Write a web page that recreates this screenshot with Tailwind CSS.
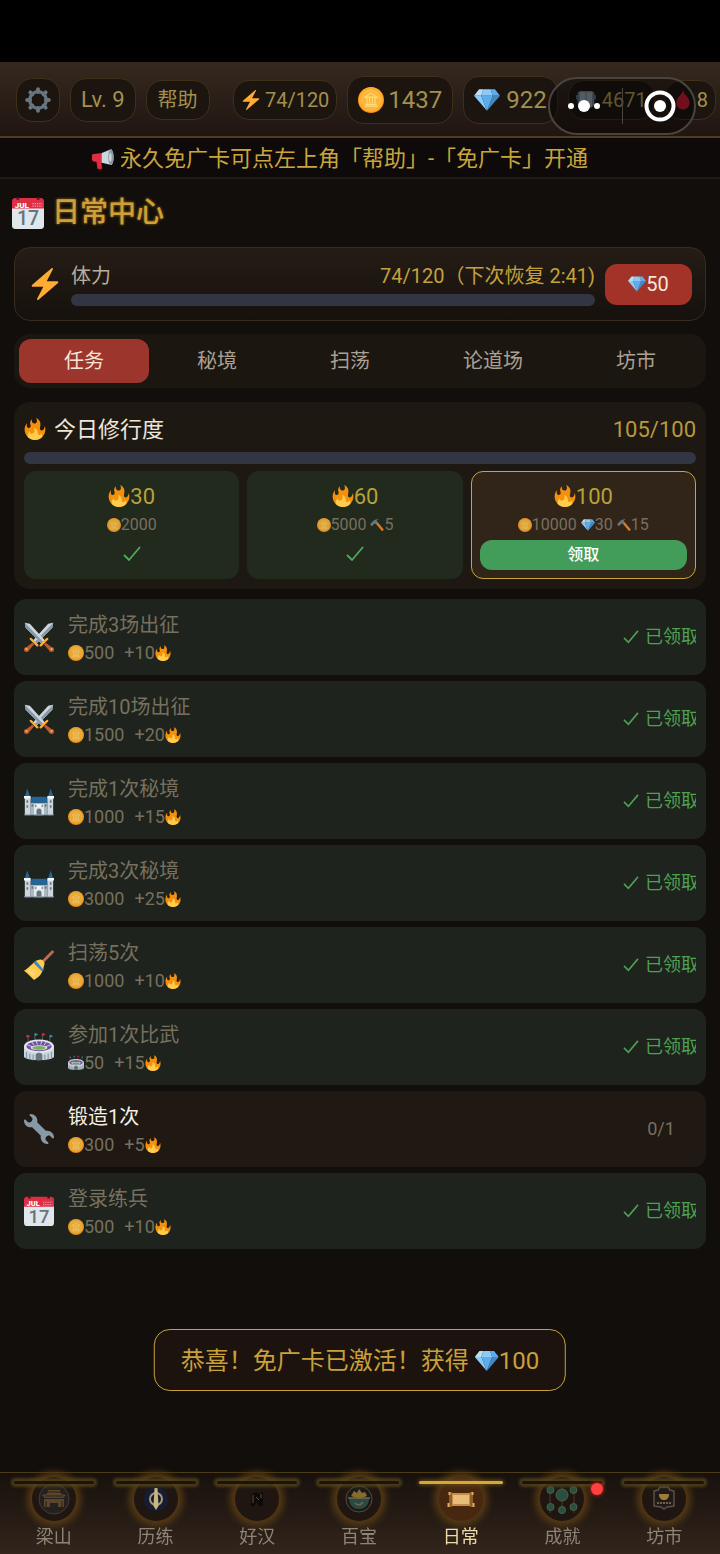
<!DOCTYPE html>
<html lang="zh-CN">
<head>
    <meta charset="UTF-8">
    <meta name="viewport" content="width=device-width, initial-scale=1.0">
    <title>日常中心</title>
    <script src="https://cdn.jsdelivr.net/npm/@tailwindcss/browser@4"></script>
</head>
<body class="bg-[#120e0b] font-[Roboto,'Noto_Sans_CJK_SC',sans-serif] text-[#d9cfc0]">

    <!-- Icon sprite -->
    <svg class="hidden" aria-hidden="true">
        <symbol id="fire" viewBox="0 0 36 36">
            <path fill="#F4900C" d="M35 19c0-2.062-.367-4.039-1.04-5.868-.46 5.389-3.333 8.157-6.335 6.868-2.812-1.208-.917-5.917-.777-8.164.236-3.809-.012-8.169-6.931-11.794 2.875 5.5.333 8.917-2.333 9.125-2.958.231-5.667-2.542-4.667-7.042-3.238 2.386-3.332 6.402-2.333 9 1.042 2.708-.042 4.958-2.583 5.208-2.84.28-4.418-3.041-2.963-8.333C2.52 10.965 1 14.805 1 19c0 9.389 7.611 17 17 17s17-7.611 17-17z"/>
            <path fill="#FFCC4D" d="M28.394 23.999c.148 3.084-2.561 4.293-4.019 3.709-2.106-.843-1.541-2.291-2.083-5.291s-2.625-5.083-5.708-6c2.25 6.333-1.247 8.667-3.08 9.084-1.872.426-3.753-.001-3.968-4.007C7.352 23.668 6 26.676 6 30c0 .368.023.73.055 1.09C9.125 34.124 13.342 36 18 36s8.875-1.876 11.945-4.91c.032-.36.055-.722.055-1.09 0-2.187-.584-4.236-1.606-6.001z"/>
        </symbol>
        <symbol id="zap" viewBox="0 0 36 36">
            <path fill="#FFAC33" d="M32.938 15.651C32.792 15.26 32.418 15 32 15H19.925L26.89 1.458c.219-.426.106-.947-.271-1.243C26.437.071 26.218 0 26 0c-.233 0-.466.082-.653.243L18 6.588 3.347 19.243c-.316.273-.43.714-.284 1.105S3.582 21 4 21h12.075L9.11 34.542c-.219.426-.106.947.271 1.243.182.144.401.215.619.215.233 0 .466-.082.653-.243L18 29.412l14.653-12.655c.317-.273.43-.714.285-1.106z"/>
        </symbol>
        <symbol id="gem" viewBox="0 0 36 36">
            <path fill="#BDDDF4" d="M13 3H7l-7 9h10z"/>
            <path fill="#5DADEC" d="M36 12l-7-9h-6l3 9z"/>
            <path fill="#4289C1" d="M26 12h10L18 33z"/>
            <path fill="#8CCAF7" d="M10 12H0l18 21zm3-9l-3 9h16l-3-9z"/>
            <path fill="#5DADEC" d="M18 33l-8-21h16z"/>
        </symbol>
        <symbol id="coin" viewBox="0 0 36 36">
            <circle cx="18" cy="18" r="18" fill="#F4900C"/>
            <circle cx="18" cy="17.5" r="17" fill="#FFAC33"/>
            <circle cx="18" cy="17.5" r="13.5" fill="#FFCC4D"/>
            <circle cx="18" cy="18" r="12.7" fill="#FDB63A"/>
            <path fill="none" stroke="#FFDC7D" stroke-width="1.5" d="M9.5 14L18 8.5l8.500 5.500zM9 26.500h18M10.500 24h15M12.500 15v8M16 15v8M20 15v8M23.500 15v8"/>
        </symbol>
        <symbol id="wrench" viewBox="0 0 36 36">
            <path fill="#8899A6" d="M27.989 19.977c-.622 0-1.225.078-1.806.213L15.811 9.818c.134-.581.212-1.184.212-1.806C16.023 3.587 12.436 0 8.012 0 7.11 0 5.91.916 6.909 1.915l2.997 2.997s.999 1.998-.999 3.995-3.996.998-3.996.998L1.915 6.909C.916 5.91 0 7.105 0 8.012c0 4.425 3.587 8.012 8.012 8.012.622 0 1.225-.078 1.806-.212l10.371 10.371c-.135.581-.213 1.184-.213 1.806 0 4.425 3.588 8.011 8.012 8.011.901 0 2.101-.916 1.102-1.914l-2.997-2.997s-.999-1.998.999-3.995 3.995-.999 3.995-.999l2.997 2.997c1 .999 1.916-.196 1.916-1.102 0-4.425-3.587-8.013-8.011-8.013z"/>
        </symbol>
        <symbol id="hammer" viewBox="0 0 36 36">
            <path fill="#D97B2B" d="M13 12l4-4 18 21c1 2-3 6-5 4z"/>
            <path fill="#66757F" d="M1 17c-1-1 0-2 1-3l5-5c3-4 8-6 13-6 2 0 2 1 0 2-3 1-4 3-2 5l2 2-4 4-3-2-2 1-5 5c-1 1-2 1-3 0z"/>
        </symbol>
        <symbol id="calendar" viewBox="0 0 36 36">
            <path fill="#E0E7EC" d="M36 32a4 4 0 01-4 4H4a4 4 0 01-4-4V12h36z"/>
            <path fill="#DD2E44" d="M0 13V5a4 4 0 014-4h28a4 4 0 014 4v8z"/>
            <path fill="#4d1420" d="M5 0h3v3H5zM28 0h3v3h-3z"/>
            <text x="3" y="12" font-family="Roboto" font-size="9" font-weight="900" fill="#fff">JUL</text>
            <path stroke="#F4ABBA" stroke-width="1.300" stroke-dasharray="1.300 1.300" d="M23 7.500h11M23 10.300h11"/>
            <text x="18" y="32" text-anchor="middle" font-family="Roboto" font-size="22" font-weight="500" fill="#66757F">17</text>
        </symbol>
        <symbol id="swords" viewBox="0 0 36 36">
            <g id="sword">
                <path fill="#CCD6DD" d="M35 1l-1 6-20 20-4-4L29 2z"/>
                <path fill="#8899A6" d="M35 1l-1 6-20 20-2-2z"/>
                <path fill="#BE5A32" d="M2 31l8-6 2 2-7 8z"/>
                <path fill="#FFAC33" d="M7 21c-1-2 1-3 3-1l7 7c1 2 0 3-2 2z"/>
                <circle cx="3" cy="33" r="3" fill="#BE5A32"/>
                <circle cx="3" cy="32.500" r="1.400" fill="#FFAC33"/>
            </g>
            <use href="#sword" transform="matrix(-1 0 0 1 36 0)"/>
        </symbol>
        <symbol id="castle" viewBox="0 0 36 36">
            <path fill="#CCD6DD" d="M1 14h7v21H1zM28 14h7v21h-7z"/>
            <path fill="#AAB8C2" d="M8 20h20v15H8z"/>
            <path fill="#E1E8ED" d="M12 22h12v13H12z"/>
            <path fill="#226699" d="M4 3l3 9H1zM32 3l3 9h-6zM9 13h18l1 7H8z"/>
            <path fill="#F5F8FA" d="M0 12h8v3H0zM28 12h8v3h-8zM15 22h6v3h-6z"/>
            <path fill="#66757F" d="M3 17h2v3H3zM31 17h2v3h-2zM3 23h2v3H3zM31 23h2v3h-2zM9 22h2v3H9zM25 22h2v3h-2zM13 23h2v2h-2zM21 23h2v2h-2zM15 35v-5a3 3 0 016 0v5z"/>
            <path fill="#8899A6" d="M0 34h36v1H0z"/>
        </symbol>
        <symbol id="broom" viewBox="0 0 36 36">
            <path fill="#BF6952" d="M20 14L33 1c2-1 4 1 2 3L22 17z"/>
            <path fill="#FFCC4D" d="M12 15l10 10c-1 5-5 8-10 11C8 32 4 28 0 25c4-2 7-6 12-10z"/>
            <path fill="#FFE8B6" d="M4 25l6-4-4 6 7-4-4 6 7-4-5 7z" opacity=".5"/>
            <path fill="#3B88C3" d="M11 15l3-2 10 10-2 3z"/>
            <path fill="#FFCC4D" d="M14 13l3-1c2-1 4-1 6 1s2 4 1 6l-1 4z"/>
        </symbol>
        <symbol id="stadium" viewBox="0 0 36 36">
            <path stroke="#66757F" stroke-width=".8" d="M5 4v8M13 2v8M22 2v8M31 4v8"/>
            <path fill="#DD2E44" d="M3 3l5 2-5 2zM22 1l4 2-4 2z"/>
            <path fill="#3B94A8" d="M13 1l4 2-4 2zM31 3l4 2-4 2z"/>
            <path fill="#CCD6DD" d="M0 17v13c4 5 32 5 36 0V17z"/>
            <ellipse cx="18" cy="17" rx="18" ry="8" fill="#E1E8ED"/>
            <ellipse cx="18" cy="17" rx="15" ry="6" fill="#744EAA"/>
            <path stroke="#E1E8ED" stroke-width="1" d="M8 10l4 6M14 9l2 6M22 9l-2 6M28 10l-4 6M3 15l8 3M33 15l-8 3"/>
            <ellipse cx="18" cy="19" rx="10" ry="3" fill="#E1E8ED"/>
            <ellipse cx="18" cy="19" rx="8" ry="2.300" fill="#77B255"/>
            <path fill="#66757F" d="M14 34v-6c0-4 8-4 8 0v6z"/>
            <path stroke="#8899A6" stroke-width="1.500" d="M3 24v8M7 26v7M11 27v7M25 27v7M29 26v7M33 24v8"/>
        </symbol>
        <symbol id="megaphone" viewBox="0 0 36 36">
            <path fill="#A0041E" d="M6 20h9l2 13c0 3-7 3-8 1z"/>
            <path fill="#DD2E44" d="M0 13c0-2 1-3 3-3l14-2v16L3 22c-2 0-3-1-3-3zM8 22h7l1 12H9z"/>
            <path fill="#CCD6DD" d="M16 8L31 2c5 6 6 19 1 26l-16-4z"/>
            <ellipse cx="31" cy="15" rx="4.500" ry="13" fill="#8899A6"/>
            <ellipse cx="30" cy="15" rx="2" ry="7" fill="#CCD6DD"/>
        </symbol>
        <symbol id="gear" viewBox="0 0 36 36">
            <circle cx="18" cy="18" r="11.500" fill="none" stroke="#66757F" stroke-width="4.500"/>
            <path stroke="#66757F" stroke-width="5.500" stroke-linecap="round" d="M18 3v4M18 29v4M3 18h4M29 18h4M7.400 7.400l2.800 2.800M25.800 25.800l2.800 2.800M28.600 7.400l-2.800 2.800M10.200 25.800l-2.800 2.800"/>
        </symbol>
        <symbol id="iron" viewBox="0 0 36 36">
            <path fill="#66757F" d="M3 5l4-3h22l4 3v22c-4 5-10 7-15 7S7 32 3 27z"/>
            <path fill="#8899A6" d="M7 4h10v26H7zM19 4h10v26H19z"/>
            <path fill="#3b6284" d="M0 9h4v8H0zM32 9h4v8h-4z"/>
        </symbol>
        <symbol id="blood" viewBox="0 0 36 36">
            <path fill="#BE1931" d="M18 1c3 8 12 14 12 22a12 12 0 01-24 0C6 15 15 9 18 1z"/>
        </symbol>
        <symbol id="check" viewBox="0 0 18 16">
            <path fill="none" stroke="currentColor" stroke-width="1.800" d="M1 9l5 5L17 1"/>
        </symbol>
    </svg>

    <div class="flex min-h-screen flex-col">
        <!-- Status bar -->
        <div class="h-[62px] bg-black"></div>

        <!-- Resource header -->
        <header class="relative flex items-center justify-between overflow-hidden border-b-2 border-[#4d3c1e] bg-linear-to-b from-[#35291f] to-[#201511] pt-3.5 pr-1 pb-3 pl-4 text-xl whitespace-nowrap text-[#a3904f]">
            <div class="flex items-center gap-2.5">
                <button aria-label="设置" class="flex size-11 items-center justify-center rounded-2xl border border-[#3f301a] bg-[#1c150f]"><svg class="size-6.5"><use href="#gear"/></svg></button>
                <span class="flex h-11 items-center rounded-2xl border border-[#3f301a] bg-[#1c150f] px-2.5 text-[22px]">Lv. 9</span>
                <button class="h-10 rounded-2xl border border-[#3f301a] bg-[#1c150f] px-[11px]">帮助</button>
            </div>
            <div class="flex items-center gap-2.5">
                <span class="flex h-10 items-center gap-1 rounded-2xl border border-[#3f301a] bg-[#1c150f] px-[7px]"><svg class="size-5"><use href="#zap"/></svg>74/120</span>
                <span class="flex h-12 items-center gap-1 rounded-2xl border border-[#3f301a] bg-[#1c150f] px-2.5 text-2xl"><svg class="size-6.5"><use href="#coin"/></svg>1437</span>
                <span class="flex h-12 items-center gap-1.5 rounded-2xl border border-[#3f301a] bg-[#1c150f] px-2.5 text-2xl"><svg class="size-6.5"><use href="#gem"/></svg>922</span>
                <span class="flex h-10 items-center gap-1.5 rounded-2xl border border-[#3f301a] bg-[#1c150f] px-[7px] text-xl"><svg class="size-5"><use href="#iron"/></svg>4671</span>
                <span class="flex h-10 items-center gap-1 rounded-2xl border border-[#3f301a] bg-[#1c150f] px-[7px]"><svg class="size-5"><use href="#blood"/></svg>8</span>
            </div>
            <!-- Mini-program capsule -->
            <div class="absolute top-[15px] right-6 flex h-[58px] w-[148px] items-center rounded-full border-2 border-[#4b443e] bg-black/40">
                <button aria-label="更多" class="flex flex-1 justify-center pr-1"><svg class="h-4 w-8" viewBox="0 0 32 16" fill="#fff"><circle cx="3" cy="8" r="3"/><circle cx="16" cy="8" r="6"/><circle cx="29" cy="8" r="3"/></svg></button>
                <span class="h-9 w-px bg-[#4b443e]"></span>
                <button aria-label="关闭" class="flex flex-1 justify-center pl-1"><svg class="size-8" viewBox="0 0 32 32"><circle cx="16" cy="16" r="13.500" fill="none" stroke="#fff" stroke-width="4"/><circle cx="16" cy="16" r="6" fill="#fff"/></svg></button>
            </div>
        </header>

        <!-- Notice -->
        <div class="flex h-[41px] items-center justify-center gap-1.5 border-b-2 border-[#211b17] bg-[#0e0a09] pt-0.5 pr-10 text-[22px] text-[#c9a53c]">
            <svg class="size-[22px]"><use href="#megaphone"/></svg>
            <span>永久免广卡可点左上角「帮助」-「免广卡」开通</span>
        </div>

        <main class="flex flex-col px-3.5 pb-56">
            <h1 class="-ml-0.5 flex h-[68px] items-center gap-2 text-[28px] font-medium text-[#cf9f38]">
                <svg class="size-8"><use href="#calendar"/></svg>
                <span class="text-shadow-[0_0_3px_#a8730f]">日常中心</span>
            </h1>

            <!-- Energy -->
            <section class="flex h-[74px] items-center gap-2.5 rounded-2xl border border-[#382c1b] bg-linear-to-b from-[#251c15] to-[#16110d] pr-[13px] pl-3.5 text-xl">
                <svg class="size-8 shrink-0"><use href="#zap"/></svg>
                <div class="flex flex-1 flex-col gap-1">
                    <div class="flex justify-between leading-7">
                        <span class="text-[#b8ad9c]">体力</span>
                        <span class="text-[#c4a23a]">74/120（下次恢复 2:41)</span>
                    </div>
                    <div role="progressbar" aria-label="体力" aria-valuenow="74" aria-valuemax="120" class="h-3 rounded-full bg-[#323643]"></div>
                </div>
                <button class="flex h-[41px] w-[87px] items-center justify-center rounded-xl bg-[#a33328] text-[#f7e6d6]"><svg class="size-[18px]"><use href="#gem"/></svg>50</button>
            </section>

            <!-- Tabs -->
            <div role="tablist" class="mt-[13px] flex gap-[3px] rounded-2xl bg-[#1c1611] p-[5px] text-xl text-[#aba192]">
                <button role="tab" aria-selected="true" class="h-11 flex-auto rounded-xl bg-[#9c352b] text-[#f7e6d6]">任务</button>
                <button role="tab" class="h-11 flex-auto">秘境</button>
                <button role="tab" class="h-11 flex-auto">扫荡</button>
                <button role="tab" class="h-11 flex-auto">论道场</button>
                <button role="tab" class="h-11 flex-auto">坊市</button>
            </div>

            <!-- Daily progress -->
            <section class="mt-3.5 rounded-2xl bg-[#1e1813] p-2.5">
                <div class="flex h-[34px] items-center text-[22px]">
                    <svg class="mr-2 size-[22px]"><use href="#fire"/></svg>
                    <h2 class="flex-1 text-[#efe6da]">今日修行度</h2>
                    <span class="text-[#b8993b]">105/100</span>
                </div>
                <div role="progressbar" aria-label="今日修行度" aria-valuenow="105" aria-valuemax="100" class="mt-1.5 h-3 rounded-full bg-[#323643]"></div>
                <div class="mt-[7px] flex gap-2 text-base text-[#77705f]">
                    <div class="flex flex-1 flex-col items-center rounded-xl bg-[#222a1e] px-1 py-[9px]">
                        <p class="flex h-8 items-center text-[22px] text-[#b8a03b]"><svg class="size-[22px]"><use href="#fire"/></svg>30</p>
                        <p class="flex h-6.5 items-center"><svg class="size-3.5 opacity-85"><use href="#coin"/></svg>2000</p>
                        <svg class="mt-2 h-4 w-[18px] text-[#4faa5c]"><use href="#check"/></svg>
                    </div>
                    <div class="flex flex-1 flex-col items-center rounded-xl bg-[#222a1e] px-1 py-[9px]">
                        <p class="flex h-8 items-center text-[22px] text-[#b8a03b]"><svg class="size-[22px]"><use href="#fire"/></svg>60</p>
                        <p class="flex h-6.5 items-center"><svg class="size-3.5 opacity-85"><use href="#coin"/></svg>5000<svg class="ml-1 size-3.5"><use href="#hammer"/></svg>5</p>
                        <svg class="mt-2 h-4 w-[18px] text-[#4faa5c]"><use href="#check"/></svg>
                    </div>
                    <div class="flex flex-1 flex-col items-center rounded-xl border border-[#c9a53c] bg-[#302518] p-2">
                        <p class="flex h-8 items-center text-[22px] text-[#b8a03b]"><svg class="size-[22px]"><use href="#fire"/></svg>100</p>
                        <p class="flex h-6.5 items-center"><svg class="size-3.5 opacity-85"><use href="#coin"/></svg>10000<svg class="ml-1 size-3.5"><use href="#gem"/></svg>30<svg class="ml-1 size-3.5"><use href="#hammer"/></svg>15</p>
                        <button class="mt-0.5 h-[30px] w-full rounded-xl bg-[#429d5b] font-medium text-white">领取</button>
                    </div>
                </div>
            </section>

            <!-- Tasks -->
            <ul class="mt-2.5 flex flex-col gap-1.5 text-lg text-[#77705f]">
                <li class="flex h-[76px] items-center gap-3.5 rounded-xl bg-[#1e231d] px-2.5">
                    <svg class="size-[30px]"><use href="#swords"/></svg>
                    <div class="flex-1 pt-1">
                        <h3 class="text-xl leading-7">完成3场出征</h3>
                        <p class="flex h-7 items-center"><svg class="size-4 opacity-90"><use href="#coin"/></svg>500<span class="ml-2.5">+10</span><svg class="size-4"><use href="#fire"/></svg></p>
                    </div>
                    <span class="flex w-[73px] items-center gap-1.5 overflow-hidden whitespace-nowrap text-[#4fa052]"><svg class="h-3.5 w-4 shrink-0"><use href="#check"/></svg>已领取</span>
                </li>
                <li class="flex h-[76px] items-center gap-3.5 rounded-xl bg-[#1e231d] px-2.5">
                    <svg class="size-[30px]"><use href="#swords"/></svg>
                    <div class="flex-1 pt-1">
                        <h3 class="text-xl leading-7">完成10场出征</h3>
                        <p class="flex h-7 items-center"><svg class="size-4 opacity-90"><use href="#coin"/></svg>1500<span class="ml-2.5">+20</span><svg class="size-4"><use href="#fire"/></svg></p>
                    </div>
                    <span class="flex w-[73px] items-center gap-1.5 overflow-hidden whitespace-nowrap text-[#4fa052]"><svg class="h-3.5 w-4 shrink-0"><use href="#check"/></svg>已领取</span>
                </li>
                <li class="flex h-[76px] items-center gap-3.5 rounded-xl bg-[#1e231d] px-2.5">
                    <svg class="size-[30px]"><use href="#castle"/></svg>
                    <div class="flex-1 pt-1">
                        <h3 class="text-xl leading-7">完成1次秘境</h3>
                        <p class="flex h-7 items-center"><svg class="size-4 opacity-90"><use href="#coin"/></svg>1000<span class="ml-2.5">+15</span><svg class="size-4"><use href="#fire"/></svg></p>
                    </div>
                    <span class="flex w-[73px] items-center gap-1.5 overflow-hidden whitespace-nowrap text-[#4fa052]"><svg class="h-3.5 w-4 shrink-0"><use href="#check"/></svg>已领取</span>
                </li>
                <li class="flex h-[76px] items-center gap-3.5 rounded-xl bg-[#1e231d] px-2.5">
                    <svg class="size-[30px]"><use href="#castle"/></svg>
                    <div class="flex-1 pt-1">
                        <h3 class="text-xl leading-7">完成3次秘境</h3>
                        <p class="flex h-7 items-center"><svg class="size-4 opacity-90"><use href="#coin"/></svg>3000<span class="ml-2.5">+25</span><svg class="size-4"><use href="#fire"/></svg></p>
                    </div>
                    <span class="flex w-[73px] items-center gap-1.5 overflow-hidden whitespace-nowrap text-[#4fa052]"><svg class="h-3.5 w-4 shrink-0"><use href="#check"/></svg>已领取</span>
                </li>
                <li class="flex h-[76px] items-center gap-3.5 rounded-xl bg-[#1e231d] px-2.5">
                    <svg class="size-[30px]"><use href="#broom"/></svg>
                    <div class="flex-1 pt-1">
                        <h3 class="text-xl leading-7">扫荡5次</h3>
                        <p class="flex h-7 items-center"><svg class="size-4 opacity-90"><use href="#coin"/></svg>1000<span class="ml-2.5">+10</span><svg class="size-4"><use href="#fire"/></svg></p>
                    </div>
                    <span class="flex w-[73px] items-center gap-1.5 overflow-hidden whitespace-nowrap text-[#4fa052]"><svg class="h-3.5 w-4 shrink-0"><use href="#check"/></svg>已领取</span>
                </li>
                <li class="flex h-[76px] items-center gap-3.5 rounded-xl bg-[#1e231d] px-2.5">
                    <svg class="size-[30px]"><use href="#stadium"/></svg>
                    <div class="flex-1 pt-1">
                        <h3 class="text-xl leading-7">参加1次比武</h3>
                        <p class="flex h-7 items-center"><svg class="size-4 opacity-90"><use href="#stadium"/></svg>50<span class="ml-2.5">+15</span><svg class="size-4"><use href="#fire"/></svg></p>
                    </div>
                    <span class="flex w-[73px] items-center gap-1.5 overflow-hidden whitespace-nowrap text-[#4fa052]"><svg class="h-3.5 w-4 shrink-0"><use href="#check"/></svg>已领取</span>
                </li>
                <li class="flex h-[76px] items-center gap-3.5 rounded-xl bg-[#1f1813] px-2.5">
                    <svg class="size-[30px]"><use href="#wrench"/></svg>
                    <div class="flex-1 pt-1">
                        <h3 class="text-xl leading-7 text-[#f6eee2]">锻造1次</h3>
                        <p class="flex h-7 items-center"><svg class="size-4 opacity-90"><use href="#coin"/></svg>300<span class="ml-2.5">+5</span><svg class="size-4"><use href="#fire"/></svg></p>
                    </div>
                    <span class="w-[70px] text-center">0/1</span>
                </li>
                <li class="flex h-[76px] items-center gap-3.5 rounded-xl bg-[#1e231d] px-2.5">
                    <svg class="size-[30px]"><use href="#calendar"/></svg>
                    <div class="flex-1 pt-1">
                        <h3 class="text-xl leading-7">登录练兵</h3>
                        <p class="flex h-7 items-center"><svg class="size-4 opacity-90"><use href="#coin"/></svg>500<span class="ml-2.5">+10</span><svg class="size-4"><use href="#fire"/></svg></p>
                    </div>
                    <span class="flex w-[73px] items-center gap-1.5 overflow-hidden whitespace-nowrap text-[#4fa052]"><svg class="h-3.5 w-4 shrink-0"><use href="#check"/></svg>已领取</span>
                </li>
            </ul>
        </main>
    </div>

    <!-- Toast -->
    <div role="status" class="fixed bottom-[163px] left-1/2 flex h-[62px] -translate-x-1/2 items-center rounded-2xl border border-[#c9a03a] bg-[#1d130e] px-6.5 pt-0.5 text-2xl whitespace-nowrap text-[#c9a03a]">
        恭喜！免广卡已激活！获得<svg class="ml-1.5 size-6"><use href="#gem"/></svg>100
    </div>

    <!-- Bottom navigation -->
    <nav class="fixed inset-x-0 bottom-0 flex h-[82px] border-t border-[#4b3b16] bg-linear-to-b from-[#17110d] to-[#33251c] pr-[5px] pl-[3px] text-lg text-[#8f8574]">
        <a href="#" class="relative flex flex-1 flex-col items-center pt-1">
            <span class="flex size-11 items-center justify-center rounded-full bg-[#1f1611] shadow-[0_0_7px_5px_#553914]">
                <svg class="size-8 opacity-80" viewBox="0 0 32 32"><circle cx="16" cy="16" r="15" fill="#262320" stroke="#4b4842"/><path fill="#6b5235" d="M4 12l5-1 1-4h12l1 4 5 1-3 3H7zM6 16h20v8h-6v-4h-8v4H6z"/><path stroke="#2b2119" d="M9 9h14M7 13h18M8 18v6M24 18v6"/></svg>
            </span>
            <span class="absolute top-2 h-[3px] w-20 rounded-full bg-[#1c1409] shadow-[0_0_3px_3px_#56461bcc]"></span>
            <span class="pt-0.5 leading-7">梁山</span>
        </a>
        <a href="#" class="relative flex flex-1 flex-col items-center pt-1">
            <span class="flex size-11 items-center justify-center rounded-full bg-[#1f1611] shadow-[0_0_7px_5px_#553914]">
                <svg class="size-8" viewBox="0 0 32 32"><circle cx="16" cy="16" r="12" fill="#171c35"/><circle cx="16" cy="16" r="6" fill="none" stroke="#a59a7b" stroke-width="2"/><path fill="#c9b87c" d="M14.500 5h3l1 18-2.500 4-2.500-4z"/></svg>
            </span>
            <span class="absolute top-2 h-[3px] w-20 rounded-full bg-[#1c1409] shadow-[0_0_3px_3px_#56461bcc]"></span>
            <span class="pt-0.5 leading-7">历练</span>
        </a>
        <a href="#" class="relative flex flex-1 flex-col items-center pt-1">
            <span class="flex size-11 items-center justify-center rounded-full bg-[#1f1611] shadow-[0_0_7px_5px_#553914]">
                <svg class="size-8" viewBox="0 0 32 32"><path fill="#0d0a08" d="M10 12l5-3 3 2 4-2v14h-4l-2-5-3 5h-3z"/><path stroke="#5b5343" d="M12 12v8M15 14l3 3M20 11v4"/></svg>
            </span>
            <span class="absolute top-2 h-[3px] w-20 rounded-full bg-[#1c1409] shadow-[0_0_3px_3px_#56461bcc]"></span>
            <span class="pt-0.5 leading-7">好汉</span>
        </a>
        <a href="#" class="relative flex flex-1 flex-col items-center pt-1">
            <span class="flex size-11 items-center justify-center rounded-full bg-[#1f1611] shadow-[0_0_7px_5px_#553914]">
                <svg class="size-8 opacity-80" viewBox="0 0 32 32"><circle cx="16" cy="16" r="13" fill="#191a17" stroke="#5d5b4c"/><path fill="#2c5750" d="M6 15h20c0 6-3 11-10 11S6 21 6 15z"/><path fill="#a38237" d="M8 13l3-5 3 2 2-4 3 4 3-1 2 4-8 3z"/><path fill="none" stroke="#8c7c4e" stroke-width="1.500" d="M5 15h22M12 20c3 3 6 2 8-1"/></svg>
            </span>
            <span class="absolute top-2 h-[3px] w-20 rounded-full bg-[#1c1409] shadow-[0_0_3px_3px_#56461bcc]"></span>
            <span class="pt-0.5 leading-7">百宝</span>
        </a>
        <a href="#" aria-current="page" class="relative flex flex-1 flex-col items-center pt-1 text-[#f0dba6]">
            <span class="flex size-11 items-center justify-center rounded-full bg-[#482711] shadow-[0_0_7px_5px_#553914]">
                <svg class="size-8" viewBox="0 0 32 32"><path fill="#c58d43" d="M5 10h22v13H5z"/><path fill="#e6bd79" d="M8 12h16v9H8z"/><path fill="#8e5d28" d="M4 9h3v15H4zM25 9h3v15h-3z"/><path stroke="#e0b05c" stroke-width="2" d="M4.500 9v3M27.500 9v3M3.500 20v4M28.500 20v4"/></svg>
            </span>
            <span class="absolute top-2 h-[3px] w-[84px] rounded-full bg-[#d4a93a] shadow-[0_0_4px_1px_#6b4f16]"></span>
            <span class="pt-0.5 leading-7">日常</span>
        </a>
        <a href="#" class="relative flex flex-1 flex-col items-center pt-1">
            <span class="flex size-11 items-center justify-center rounded-full bg-[#1f1611] shadow-[0_0_7px_5px_#553914]">
                <svg class="size-8" viewBox="0 0 32 32"><path stroke="#553525" d="M4 3v27M28 3v27M16 4v26"/><g fill="#28503e" stroke="#4c6049"><circle cx="16" cy="12" r="6"/><circle cx="4.500" cy="7" r="3.500"/><circle cx="27.500" cy="7" r="3.500"/><circle cx="4.500" cy="24" r="3.500"/><circle cx="27.500" cy="24" r="3.500"/><circle cx="16" cy="27" r="3.500"/></g></svg>
            </span>
            <span class="absolute top-2 h-[3px] w-20 rounded-full bg-[#1c1409] shadow-[0_0_3px_3px_#56461bcc]"></span>
            <span class="absolute top-2.5 right-2.5 size-3 rounded-full bg-[#ff4040] shadow-[0_0_4px_#ff2020]"></span>
            <span class="pt-0.5 leading-7">成就</span>
        </a>
        <a href="#" class="relative flex flex-1 flex-col items-center pt-1">
            <span class="flex size-11 items-center justify-center rounded-full bg-[#1f1611] shadow-[0_0_7px_5px_#553914]">
                <svg class="size-8" viewBox="0 0 32 32"><path fill="#201b18" stroke="#5a5148" stroke-width="1.500" d="M6 8l4-1 2-3h8l2 3 4 1v15l-7 1-3 2-3-2-7-1z"/><path fill="#a07a38" d="M11 11h10c0 4-2 6-5 6s-5-2-5-6z"/><path stroke="#75644a" stroke-width="2" stroke-dasharray="2 1" d="M9 20h14"/></svg>
            </span>
            <span class="absolute top-2 h-[3px] w-20 rounded-full bg-[#1c1409] shadow-[0_0_3px_3px_#56461bcc]"></span>
            <span class="pt-0.5 leading-7">坊市</span>
        </a>
    </nav>

</body>
</html>
